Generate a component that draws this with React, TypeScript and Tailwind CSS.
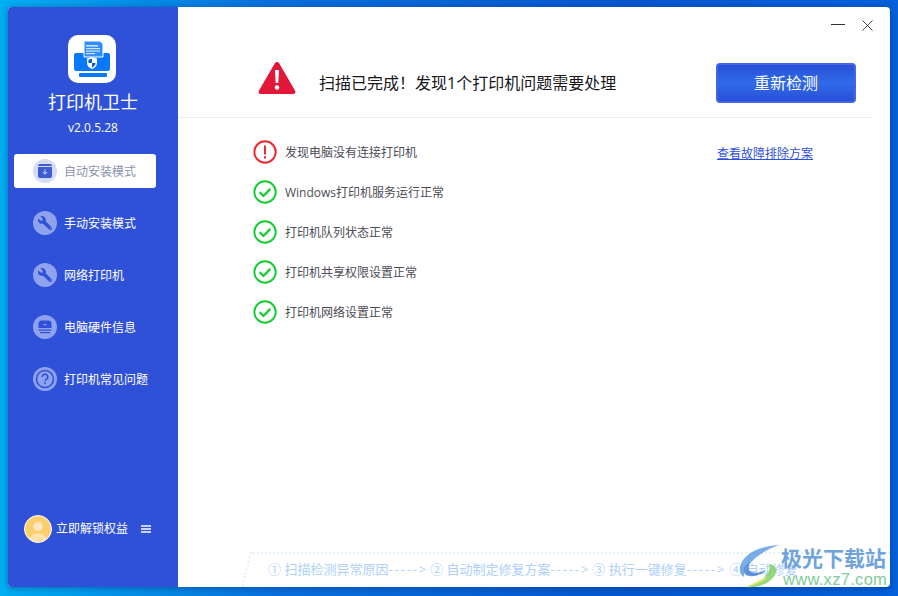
import React from "react";
import { FaWrench } from "react-icons/fa";

const font = { fontFamily: '"Open Sans","Noto Sans CJK SC",sans-serif' };

function IconCircle({ children, active }: { children: React.ReactNode; active?: boolean }) {
  return (
    <div className={`flex h-6 w-6 shrink-0 items-center justify-center rounded-full ${active ? "bg-[#d5dcf7]" : "bg-[#8ea2ee]"}`}>
      {children}
    </div>
  );
}

function Logo() {
  return (
    <div className="mr-[2px] flex h-12 w-12 items-center justify-center rounded-[10px] bg-white">
      <svg width="38" height="38" viewBox="0 0 38 38">
        <rect x="1" y="13" width="36" height="18" rx="2" fill="#0a78fb" />
        <rect x="6" y="33" width="28" height="4" rx="1" fill="#0a78fb" />
        <rect x="5" y="31" width="28" height="1.4" fill="#fff" />
        <path d="M11 1h16l3 3v13H11z" fill="#2f8efb" stroke="#fff" strokeWidth="1" />
        <rect x="13" y="5" width="12" height="1.6" fill="#cfe4ff" />
        <rect x="13" y="8" width="14" height="1.2" fill="#cfe4ff" />
        <rect x="13" y="10.5" width="14" height="1.2" fill="#cfe4ff" />
        <rect x="13" y="13" width="9" height="1.2" fill="#cfe4ff" />
        <path d="M19 17l5 1.6v4.4c0 3-2.2 4.8-5 6-2.8-1.2-5-3-5-6v-4.4z" fill="#fff" />
        <path d="M19 18.5v4.5h-3.6v-3.3zM19 23h3.6c-.2 2.2-1.7 3.500-3.600 4.400z" fill="#0a5fd0" />
      </svg>
    </div>
  );
}

function NavItem({ icon, label, active }: { icon: React.ReactNode; label: string; active?: boolean }) {
  return (
    <div
      className={`ml-[6px] mr-[22px] flex h-[34px] items-center gap-[7px] rounded-[3px] pl-[19px] text-[12px] ${
        active ? "bg-white text-[#8c93ad]" : "text-white"
      }`}
    >
      <IconCircle active={active}>{icon}</IconCircle>
      <span className="mt-[2px] whitespace-nowrap">{label}</span>
    </div>
  );
}

function Check() {
  return (
    <svg width="24" height="24" viewBox="0 0 24 24" fill="none">
      <circle cx="12" cy="12" r="10.700" stroke="#16cf33" strokeWidth="2" />
      <path d="M6.700 12.200l3.700 3.700 7-7" stroke="#16cf33" strokeWidth="2.200" />
    </svg>
  );
}

function Warn() {
  return (
    <svg width="24" height="24" viewBox="0 0 24 24" fill="none">
      <circle cx="12" cy="12" r="10.700" stroke="#ee2a30" strokeWidth="2" />
      <rect x="11" y="5.500" width="2" height="9" fill="#ee2a30" />
      <rect x="11" y="16.200" width="2" height="2.300" fill="#ee2a30" />
    </svg>
  );
}

function Row({ icon, text, right }: { icon: React.ReactNode; text: string; right?: string }) {
  return (
    <div className="flex h-10 items-center">
      {icon}
      <span className="ml-2 mt-[2px] text-[12px] text-[#4d4d55]">{text}</span>
      {right && <span className="ml-auto mr-[77px] mt-[4px] text-[12px] text-[#2f50d8] underline">{right}</span>}
    </div>
  );
}

function Dashes() {
  return <span className="tracking-[1.900px]">-----&gt;</span>;
}

export default function App() {
  return (
    <div
      style={font}
      className="relative flex h-[596px] w-[898px] overflow-hidden bg-[linear-gradient(90deg,#00aef2_0%,#0a70dc_30%,#0557cf_70%,#0460da_100%)] pb-[9px] pl-2 pr-2 pt-[7px]"
    >
      <div className="flex flex-1 overflow-hidden rounded-[4px] bg-white shadow-[0_1px_6px_rgba(0,30,90,0.45)]">
        <aside className="flex w-[170px] shrink-0 flex-col bg-[#2f51d8] text-white">
          <div className="mt-[28px] flex flex-col items-center">
            <Logo />
            <div className="mt-[7px] text-[18px] leading-[24px]">打印机卫士</div>
            <div className="mt-[6px] text-[12px] leading-[16px]">v2.0.5.28</div>
          </div>
          <div className="mt-[18px] flex flex-col gap-[18px]">
            <NavItem
              active
              label="自动安装模式"
              icon={
                <svg width="16" height="16" viewBox="0 0 16 16">
                  <rect x="1" y="1" width="14" height="14" rx="2" fill="#3f5bd0" />
                  <rect x="1" y="3" width="14" height="1" fill="#d5dcf7" />
                  <path d="M8 6.500v4.500M5.800 9l2.200 2.200L10.200 9" stroke="#d5dcf7" strokeWidth="1" fill="none" />
                </svg>
              }
            />
            <NavItem label="手动安装模式" icon={<FaWrench size={14} color="#2f51d8" style={{ transform: "scaleX(-1)" }} />} />
            <NavItem label="网络打印机" icon={<FaWrench size={14} color="#2f51d8" style={{ transform: "scaleX(-1)" }} />} />
            <NavItem
              label="电脑硬件信息"
              icon={
                <svg width="16" height="14" viewBox="0 0 16 14">
                  <path d="M1.500 8V3.500C1.500 1.500 3 .5 4.500.5h7c1.500 0 3 1 3 3V8z" fill="#2f51d8" />
                  <rect x="6.500" y="4" width="3" height="1.200" fill="#8ea2ee" />
                  <rect x="1.500" y="9.500" width="13" height="1.200" fill="#2f51d8" />
                  <rect x="3" y="12" width="10" height="1.200" fill="#2f51d8" />
                </svg>
              }
            />
            <NavItem
              label="打印机常见问题"
              icon={
                <svg width="20" height="20" viewBox="0 0 20 20" fill="none">
                  <circle cx="10" cy="10" r="8.500" stroke="#2f51d8" strokeWidth="1.500" />
                  <path d="M7.300 8a2.700 2.700 0 1 1 4 2.300c-.9.500-1.300 1-1.300 2" stroke="#2f51d8" strokeWidth="1.500" />
                  <rect x="9.200" y="13.400" width="1.600" height="1.700" fill="#2f51d8" />
                </svg>
              }
            />
          </div>
          <div className="mb-[44px] mt-auto flex items-center pl-4">
            <div className="flex h-7 w-7 items-end justify-center overflow-hidden rounded-full border border-white bg-[#fbcf6d]">
              <svg width="26" height="26" viewBox="0 0 26 26">
                <circle cx="13" cy="10.500" r="4.500" fill="#ffe9c4" />
                <path d="M4 26c0-6 4-8.500 9-8.500s9 2.500 9 8.500z" fill="#ffe3ad" />
              </svg>
            </div>
            <span className="ml-1 text-[12px]">立即解锁权益</span>
            <div className="ml-[13px] flex w-[10px] flex-col gap-[1px]">
              <div className="h-[2px] bg-[#c9d2f5]" />
              <div className="h-[2px] bg-[#c9d2f5]" />
              <div className="h-[2px] bg-[#c9d2f5]" />
            </div>
          </div>
        </aside>

        <main className="relative flex min-w-0 flex-1 flex-col">
          <div className="flex h-[36px] items-center justify-end gap-[17px] pr-[17px]">
            <div className="mb-[2px] h-px w-[14px] bg-[#333]" />
            <svg width="11" height="11" viewBox="0 0 11 11" stroke="#444" strokeWidth="1">
              <path d="M.5.5l10 10M10.500.5l-10 10" />
            </svg>
          </div>
          <div className="mr-[18px] flex h-[75px] items-center border-b border-[#ececec] pl-[80px] pr-4 pt-[6px]">
            <svg width="38" height="34" viewBox="0 0 38 34" className="mb-[10px]">
              <path d="M19 1c1 0 1.700.5 2.300 1.500l15.700 27c1 1.800.2 3.500-1.800 3.500H2.800c-2 0-2.800-1.700-1.800-3.500l15.700-27C17.300 1.500 18 1 19 1z" fill="#e3173a" />
              <path d="M17 9h4l-.7 13h-2.600z" fill="#fff" />
              <circle cx="19" cy="26.500" r="2.300" fill="#fff" />
            </svg>
            <span className="ml-[23px] text-[16px] text-[#17171c]">扫描已完成！发现1个打印机问题需要处理</span>
            <button className="ml-auto flex h-10 w-[140px] shrink-0 items-center justify-center rounded-[4px] border-2 border-[#4565e4] bg-[linear-gradient(180deg,#2a4fd8_0%,#2f6be8_50%,#2a4fd8_100%)] text-[16px] text-white">
              重新检测
            </button>
          </div>
          <div className="ml-[75px] mt-[14px] flex flex-col">
            <Row icon={<Warn />} text="发现电脑没有连接打印机" right="查看故障排除方案" />
            <Row icon={<Check />} text="Windows打印机服务运行正常" />
            <Row icon={<Check />} text="打印机队列状态正常" />
            <Row icon={<Check />} text="打印机共享权限设置正常" />
            <Row icon={<Check />} text="打印机网络设置正常" />
          </div>
          <div className="relative mt-auto ml-[72px] flex h-[35px] items-center whitespace-nowrap border-t-2 border-dotted border-[#e4effb] pb-[2px] pl-[18px] text-[13px] text-[#aed0fb]">
            <div className="absolute bottom-0 left-0 top-[-2px] w-0 origin-top rotate-[14deg] border-l-2 border-dotted border-[#e4effb]" />
            <span>① 扫描检测异常原因</span>
            <Dashes />
            <span className="ml-[2px]">② 自动制定修复方案</span>
            <Dashes />
            <span className="ml-[2px]">③ 执行一键修复</span>
            <Dashes />
            <span className="ml-[3px]">④ 自动修复</span>
          </div>
        </main>
      </div>

      <div className="absolute left-[737px] top-[543px] flex items-center">
        <svg width="50" height="46" viewBox="0 0 50 46" fill="none" className="opacity-80">
          <path d="M42 2C24 3 6 10 3 24c-1 5 1 8 4 10-1-9 12-24 35-32z" fill="#5a9be0" />
          <path d="M14 18c-7 4-10 10-5 14 5 3 16 0 20-5-6 3-15 4-17 0-1-3 0-6 2-9z" fill="#3b7cd0" />
          <path d="M9 44c14 2 28-6 30-15 1-5-3-8-7-8 3 6-6 20-23 23z" fill="#7fcf5c" />
          <path d="M9 44c9-1 17-5 22-10l-6 2c-6 3-12 6-16 8z" fill="#e4df4d" />
        </svg>
        <div className="-ml-[6px] flex flex-col">
          <span className="text-[21px] font-bold leading-[26px] text-[#6fa3dc]">极光下载站</span>
          <span style={{ fontFamily: '"Liberation Sans",sans-serif' }} className="ml-[2px] text-[16.500px] leading-[17px] tracking-[0.3px] text-[#7fcb9a]">
            www.xz7.com
          </span>
        </div>
      </div>
    </div>
  );
}
